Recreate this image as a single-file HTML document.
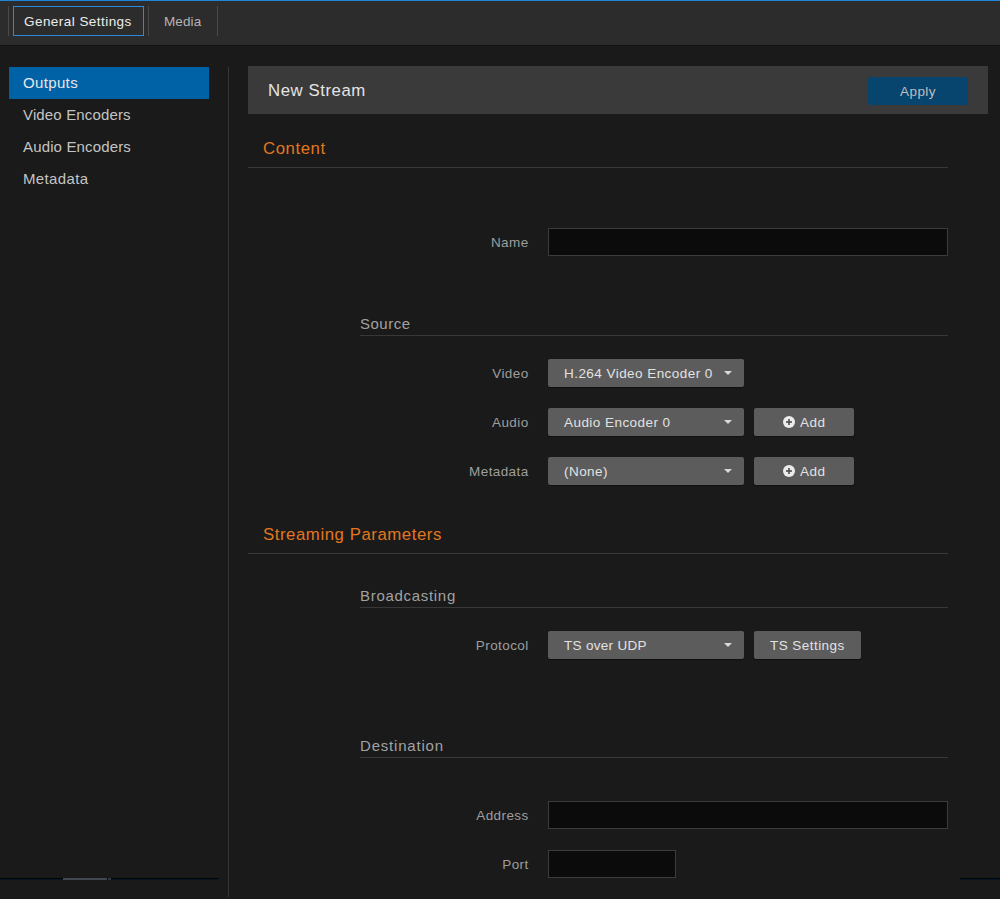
<!DOCTYPE html>
<html><head><meta charset="utf-8">
<style>
html,body{margin:0;padding:0;}
body{width:1000px;height:899px;background:#1a1a1a;position:relative;overflow:hidden;font-family:"Liberation Sans",sans-serif;}
.a{position:absolute;}
.t{position:absolute;white-space:nowrap;line-height:1;}
#topbar{left:0;top:0;width:1000px;height:45px;background:#2c2c2c;}
#topline{left:0;top:0;width:1000px;height:1px;background:#1e85d8;}
.sep{width:1px;background:#4a4a4a;top:6px;height:30px;}
#gs{left:13px;top:6px;width:129px;height:28px;border:1px solid #2b88da;}
.sm{font-size:13.5px;letter-spacing:0.45px;}
.side{font-size:15px;letter-spacing:0.15px;color:#c4c4c4;}
.hd{font-size:16.8px;letter-spacing:0.55px;}
.sub{font-size:15px;letter-spacing:0.5px;color:#a2a2a2;}
.lbl{font-size:13.5px;letter-spacing:0.4px;color:#9e9e9e;}
.hline{height:1px;background:#383838;}
.sel{background:#5c5c5c;border-radius:2px;height:28px;box-shadow:0 1px 1px rgba(0,0,0,0.35);}
.btn{background:#5c5c5c;border-radius:2px;height:28px;box-shadow:0 1px 1px rgba(0,0,0,0.35);}
.inp{background:#0b0b0b;border:1px solid #3c3c3c;box-sizing:border-box;height:28px;}
.caret{width:0;height:0;border-left:4px solid transparent;border-right:4px solid transparent;border-top:4px solid #d8d8d8;}
.stxt{font-size:13.5px;letter-spacing:0.45px;color:#e2e2e2;}
</style></head>
<body>
<div id="topbar" class="a"></div>
<div id="topline" class="a"></div>
<div class="a" style="left:0;top:45px;width:1000px;height:1px;background:#121212"></div>
<div class="a sep" style="left:8px"></div>
<div class="a sep" style="left:148px"></div>
<div class="a sep" style="left:217px"></div>
<div id="gs" class="a"></div>
<div class="t sm" style="left:24px;top:15px;color:#ececec">General Settings</div>
<div class="t sm" style="left:164px;top:14.5px;color:#b4b4b4;font-size:13.5px;letter-spacing:0.1px">Media</div>

<!-- sidebar -->
<div class="a" style="left:9px;top:67px;width:200px;height:32px;background:#0062a6"></div>
<div class="t side" style="left:23px;top:75px;color:#e6e6e6;letter-spacing:0.35px">Outputs</div>
<div class="t side" style="left:23px;top:107px">Video Encoders</div>
<div class="t side" style="left:23px;top:139px">Audio Encoders</div>
<div class="t side" style="left:23px;top:171px;letter-spacing:0.35px">Metadata</div>
<div class="a" style="left:228px;top:67px;width:1px;height:830px;background:#363636"></div>

<!-- header -->
<div class="a" style="left:248px;top:66px;width:740px;height:48px;background:#3a3a3a"></div>
<div class="t hd" style="left:268px;top:83px;color:#e4e4e4">New Stream</div>
<div class="a" style="left:868px;top:77px;width:100px;height:28px;background:#07446e;border-radius:2px"></div>
<div class="t sm" style="left:900px;top:84.5px;color:#bfbfbf">Apply</div>

<!-- content -->
<div class="t hd" style="left:263px;top:141px;color:#e2771f">Content</div>
<div class="a hline" style="left:248px;top:167px;width:700px"></div>

<div class="t lbl" style="left:400px;width:128.6px;text-align:right;top:235.5px">Name</div>
<div class="a inp" style="left:548px;top:228px;width:400px"></div>

<div class="t sub" style="left:360px;top:315.5px">Source</div>
<div class="a hline" style="left:360px;top:335px;width:588px"></div>

<div class="t lbl" style="left:400px;width:128.6px;text-align:right;top:367px">Video</div>
<div class="a sel" style="left:548px;top:359px;width:196px"></div>
<div class="t stxt" style="left:564px;top:367px">H.264 Video Encoder 0</div>
<div class="a caret" style="left:724px;top:371px"></div>

<div class="t lbl" style="left:400px;width:128.6px;text-align:right;top:416px">Audio</div>
<div class="a sel" style="left:548px;top:408px;width:196px"></div>
<div class="t stxt" style="left:564px;top:416px">Audio Encoder 0</div>
<div class="a caret" style="left:724px;top:420px"></div>
<div class="a btn" style="left:754px;top:408px;width:100px"></div>
<svg class="a" style="left:783px;top:416px" width="12" height="12" viewBox="0 0 12 12"><circle cx="6" cy="6" r="6" fill="#ececec"/><rect x="3" y="5.2" width="6" height="1.6" fill="#4e4e4e"/><rect x="5.2" y="3" width="1.6" height="6" fill="#4e4e4e"/></svg>
<div class="t stxt" style="left:800px;top:416px">Add</div>

<div class="t lbl" style="left:400px;width:128.6px;text-align:right;top:465px">Metadata</div>
<div class="a sel" style="left:548px;top:457px;width:196px"></div>
<div class="t stxt" style="left:564px;top:465px">(None)</div>
<div class="a caret" style="left:724px;top:469px"></div>
<div class="a btn" style="left:754px;top:457px;width:100px"></div>
<svg class="a" style="left:783px;top:465px" width="12" height="12" viewBox="0 0 12 12"><circle cx="6" cy="6" r="6" fill="#ececec"/><rect x="3" y="5.2" width="6" height="1.6" fill="#4e4e4e"/><rect x="5.2" y="3" width="1.6" height="6" fill="#4e4e4e"/></svg>
<div class="t stxt" style="left:800px;top:465px">Add</div>

<div class="t hd" style="left:263px;top:527px;color:#e2771f">Streaming Parameters</div>
<div class="a hline" style="left:248px;top:553px;width:700px"></div>

<div class="t sub" style="left:360px;top:587.5px;letter-spacing:0.7px">Broadcasting</div>
<div class="a hline" style="left:360px;top:607px;width:588px"></div>

<div class="t lbl" style="left:400px;width:128.6px;text-align:right;top:638.5px">Protocol</div>
<div class="a sel" style="left:548px;top:631px;width:196px"></div>
<div class="t stxt" style="left:564px;top:639px;letter-spacing:0.3px">TS over UDP</div>
<div class="a caret" style="left:724px;top:643px"></div>
<div class="a btn" style="left:754px;top:631px;width:107px"></div>
<div class="t stxt" style="left:770px;top:639px">TS Settings</div>

<div class="t sub" style="left:360px;top:737.5px;letter-spacing:0.8px">Destination</div>
<div class="a hline" style="left:360px;top:757px;width:588px"></div>

<div class="t lbl" style="left:400px;width:128.6px;text-align:right;top:808.5px">Address</div>
<div class="a inp" style="left:548px;top:801px;width:400px"></div>
<div class="t lbl" style="left:400px;width:128.6px;text-align:right;top:858px">Port</div>
<div class="a inp" style="left:548px;top:850px;width:128px"></div>

<!-- bottom scroll lines -->
<div class="a" style="left:0;top:878px;width:219px;height:1px;background:#020406"></div>
<div class="a" style="left:0;top:879px;width:219px;height:1px;background:#061624"></div>
<div class="a" style="left:63px;top:878px;width:44px;height:2px;background:#42484f"></div>
<div class="a" style="left:108px;top:878px;width:3px;height:2px;background:#33383e"></div>
<div class="a" style="left:960px;top:878px;width:40px;height:1px;background:#020406"></div>
<div class="a" style="left:960px;top:879px;width:40px;height:1px;background:#061624"></div>
</body></html>
